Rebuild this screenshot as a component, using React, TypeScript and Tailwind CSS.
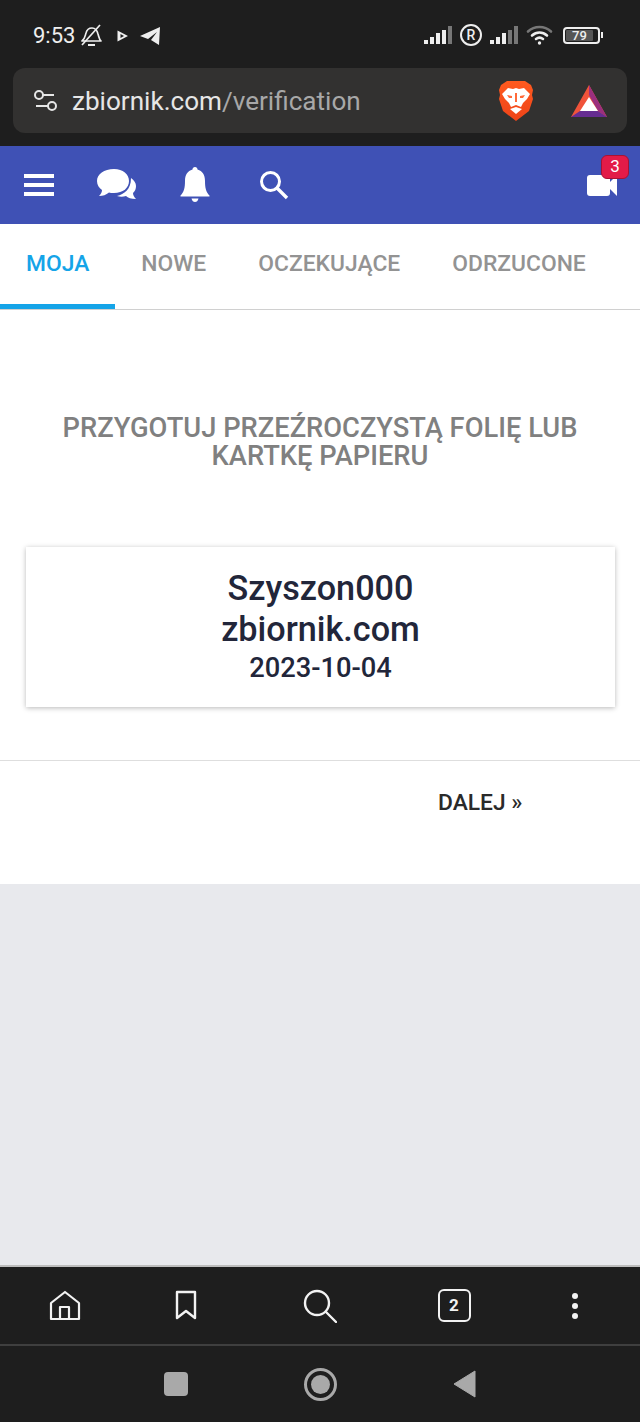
import React from 'react'

const roboto = 'font-["Roboto",sans-serif]'

const SignalBars = ({ dim }: { dim: number }) => {
  const heights = [4, 7, 11, 14, 18]
  return (
    <div className="flex items-end gap-[2px]">
      {heights.map((h, i) => (
        <div
          key={i}
          className={i >= dim ? 'w-[4px] bg-[#777]' : 'w-[4px] bg-[#eee]'}
          style={{ height: h }}
        />
      ))}
    </div>
  )
}

const BraveLogo = () => (
  <svg width="36" height="42" viewBox="0 0 36 42">
    <defs>
      <linearGradient id="brave" x1="0" y1="0" x2="0" y2="1">
        <stop offset="0" stopColor="#ff5a1f" />
        <stop offset="1" stopColor="#ee4318" />
      </linearGradient>
    </defs>
    <path d="M9 1 L27 1 L33 5 L35 10 L34 15 L35 19 L31 31 L18 41 L5 31 L1 19 L2 15 L1 10 L3 5 Z" fill="url(#brave)" />
    <path d="M4 14 L10 8 L15 9 L18 8 L21 9 L26 8 L32 14 L29 19 L25 23 L23 27 L18 25 L13 27 L11 23 L7 19 Z" fill="#fff" />
    <path d="M12 29 L18 27 L24 29 L18 34 Z" fill="#fff" />
    <path d="M9 15 L14 16 L14 18 L11 18 Z M27 15 L22 16 L22 18 L25 18 Z M17 13 L19 13 L19 22 L17 22 Z" fill="#ff6a3a" />
  </svg>
)

const BatLogo = () => (
  <svg width="38" height="34" viewBox="0 0 38 34">
    <path d="M19 1 L37 33 L1 33 Z" fill="#f0533a" />
    <path d="M19 1 L37 33 L28 27 L19 11 Z" fill="#9b2f7f" />
    <path d="M1 33 L10 27 L28 27 L37 33 Z" fill="#662d91" />
    <path d="M19 13 L28 27 L10 27 Z" fill="#fff" />
  </svg>
)

const StatusBar = () => (
  <div className="flex h-[68px] items-start justify-between pl-[33px] pr-[37px] pt-[22px]">
    <div className="flex items-center">
      <span className={`${roboto} text-[22px] leading-[28px] text-[#eee]`}>9:53</span>
      <svg width="22" height="24" viewBox="0 0 22 24" fill="none" stroke="#eee" strokeWidth="1.7" strokeLinejoin="round" className="ml-[5px]">
        <path d="M2 17 C5 15 5 12 6 9 C7 5 10 4 12 4 C15 4 17 6 18 10 C19 13 19 15 21 17 Z" />
        <path d="M2 21 L20 1" />
        <path d="M8 21 H15" strokeWidth="2" />
      </svg>
      <svg width="11" height="12" viewBox="0 0 11 12" className="ml-[15px]">
        <path d="M0.5 0.5 L11 6 L0.5 11.5 Z M3.5 4 L3.5 8 L7 6 Z" fill="#eee" fillRule="evenodd" />
      </svg>
      <svg width="21" height="18" viewBox="0 0 21 18" className="ml-[12px]">
        <path d="M0 9 L20 0 L19 18 L11 13 L17 5 L8 12 Z" fill="#eee" />
      </svg>
    </div>
    <div className="flex items-center gap-[8px] pt-[2px]">
      <SignalBars dim={4} />
      <div className="flex h-[22px] w-[22px] items-center justify-center rounded-full border-2 border-[#eee]">
        <span className={`${roboto} text-[14px] font-medium leading-none text-[#eee]`}>R</span>
      </div>
      <SignalBars dim={3} />
      <svg width="27" height="20" viewBox="0 0 26 20" fill="none" strokeLinecap="round">
        <path d="M1.5 6.5 C8 0.5 18 0.5 24.5 6.5" stroke="#777" strokeWidth="2.6" />
        <path d="M5.5 10.5 C10 6.5 16 6.5 20.5 10.5" stroke="#eee" strokeWidth="2.6" />
        <path d="M9.5 14 C11.5 12.5 14.5 12.5 16.5 14" stroke="#eee" strokeWidth="2.6" />
        <circle cx="13" cy="18" r="1.7" fill="#eee" />
      </svg>
      <div className="ml-[2px] flex items-center">
        <div className="flex h-[17px] w-[37px] items-center rounded-[4px] border-2 border-[#eee] p-[1px]">
          <div className={`${roboto} flex h-full w-[27px] items-center justify-center rounded-[1px] bg-[#555] text-[13px] font-medium leading-none text-[#eee]`}>
            79
          </div>
        </div>
        <div className="ml-[1px] h-[6px] w-[2px] bg-[#eee]" />
      </div>
    </div>
  </div>
)

const AddressBar = () => (
  <div className="px-[13px]">
    <div className="flex h-[65px] items-center rounded-[12px] bg-[#323130] pl-[20px] pr-[19px]">
      <svg width="26" height="24" viewBox="0 0 26 24" fill="none" stroke="#e6e6e6" strokeWidth="2">
        <circle cx="6" cy="6" r="4" />
        <path d="M10 6 H21" />
        <circle cx="19" cy="17" r="4" />
        <path d="M3 17 H15" />
      </svg>
      <span className={`${roboto} ml-[13px] flex-1 pt-[1px] text-[26.1px] leading-[32px] text-[#e6e6e6]`}>
        zbiornik.com<span className="text-[#a8a8a8]">/verification</span>
      </span>
      <BraveLogo />
      <div className="ml-[36px]">
        <BatLogo />
      </div>
    </div>
  </div>
)

const AppHeader = () => (
  <div className="mt-[13px] flex h-[78px] items-center bg-[#3f51b5] pl-[24px] pr-[23px]">
    <div className="flex w-[30px] flex-col gap-[5px] pb-[1px]">
      <div className="h-[4px] bg-white" />
      <div className="h-[4px] bg-white" />
      <div className="h-[4px] bg-white" />
    </div>
    <svg width="40" height="32" viewBox="0 0 40 32" className="ml-[43px]" fill="#fff">
      <path d="M17 0 C26 0 32 5 32 12 C32 19 26 24 17 24 C15 24 13 24 12 23.5 C9 26 6 27 2 27 C4 25 5 23 5 21 C2 19 0 16 0 12 C0 5 7 0 17 0 Z" />
      <path d="M34 9 C37 11 39 14 39 17 C39 20 38 22 36 24 C36 26 37 28 39 30 C34 30 31 29 29 27 C26 28 23 28 20 27 C27 25 34 21 34 9 Z" />
    </svg>
    <svg width="30" height="36" viewBox="0 0 30 36" fill="#fff" className="ml-[43px]">
      <path d="M15 0 C16.5 0 17.5 1 17.5 2.6 C22.5 4 25 8 25 14 C25 21 26 25 29.5 28.5 L29.5 29.5 L0.5 29.5 L0.5 28.5 C4 25 5 21 5 14 C5 8 7.5 4 12.5 2.6 C12.5 1 13.5 0 15 0 Z" />
      <path d="M11.5 31.5 H18.5 C18 34 16.5 35 15 35 C13.5 35 12 34 11.5 31.5 Z" />
    </svg>
    <svg width="30" height="30" viewBox="0 0 30 30" fill="none" stroke="#fff" className="ml-[49px]">
      <circle cx="11.5" cy="11.5" r="9" strokeWidth="3" />
      <path d="M18 18 L28 28" strokeWidth="3.4" />
    </svg>
    <div className="relative ml-auto flex h-[21px] w-[30px] items-center">
      <svg width="30" height="21" viewBox="0 0 30 21" fill="#fff">
        <rect x="0" y="0" width="23" height="21" rx="3" />
        <path d="M22 8 L30 0 L30 21 L22 13 Z" />
      </svg>
      <div className={`${roboto} absolute left-[14px] top-[-20px] flex h-[24px] w-[28px] items-center justify-center rounded-[6px] border border-[#a81234] bg-[#e31b48] text-[17px] leading-none text-white`}>
        3
      </div>
    </div>
  </div>
)

const tabs = [
  { label: 'MOJA', active: true },
  { label: 'NOWE', active: false },
  { label: 'OCZEKUJĄCE', active: false },
  { label: 'ODRZUCONE', active: false },
]

const Tabs = () => (
  <div className="flex h-[86px] border-b border-[#d0d0d0] bg-white">
    {tabs.map((tab) => (
      <div
        key={tab.label}
        className={`${roboto} px-[26px] pt-[25px] text-[22.85px] font-medium leading-[30px] ${
          tab.active ? 'border-b-[5px] border-[#15a4e8] text-[#15a4e8]' : 'text-[#939393]'
        }`}
      >
        {tab.label}
      </div>
    ))}
  </div>
)

const Verification = () => (
  <div className="bg-white">
    <div className="px-[40px] pt-[104px]">
      <h2 className={`${roboto} text-center text-[27.3px] font-medium leading-[28px] text-[#808080]`}>
        PRZYGOTUJ PRZEŹROCZYSTĄ FOLIĘ LUB KARTKĘ PAPIERU
      </h2>
    </div>
    <div className="mx-[26px] mt-[77px] flex h-[160px] w-[589px] flex-col items-center justify-center bg-white pb-[1px] text-[#22263a] shadow-[0_1px_5px_rgba(0,0,0,0.28)]">
      <div className={`${roboto} text-[34.2px] font-medium leading-[41px]`}>Szyszon000</div>
      <div className={`${roboto} text-[34.2px] font-medium leading-[41px]`}>zbiornik.com</div>
      <div className={`${roboto} text-[27.3px] font-medium leading-[36px]`}>2023-10-04</div>
    </div>
    <div className="mt-[53px] h-[124px] border-t border-[#dedede] pl-[438px] pt-[27px]">
      <span className={`${roboto} text-[22.8px] font-medium leading-[30px] text-[#2a2a2a]`}>DALEJ »</span>
    </div>
  </div>
)

const BrowserNav = () => (
  <div className="flex h-[79px] items-center border-b-2 border-[#3f3f3f] bg-[#1e1e1e] text-[#f2f2f2]">
    <div className="flex w-[130px] justify-center">
      <svg width="32" height="32" viewBox="0 0 32 32" fill="none" stroke="#f2f2f2" strokeWidth="2.2" strokeLinejoin="round">
        <path d="M2 13 L16 2 L30 13 V29 H2 Z" />
        <path d="M11 29 V17 H20 V29" />
      </svg>
    </div>
    <div className="flex w-[112px] justify-center">
      <svg width="22" height="31" viewBox="0 0 22 31" fill="none" stroke="#f2f2f2" strokeWidth="2.4" strokeLinejoin="round">
        <path d="M2 2 H20 V28 L11 21 L2 28 Z" />
      </svg>
    </div>
    <div className="flex w-[156px] justify-center">
      <svg width="34" height="34" viewBox="0 0 34 34" fill="none" stroke="#f2f2f2" strokeWidth="2.4" strokeLinecap="round">
        <circle cx="14" cy="14" r="12" />
        <path d="M23 23 L33 33" />
      </svg>
    </div>
    <div className="flex w-[112px] justify-center">
      <div className={`${roboto} flex h-[33px] w-[33px] items-center justify-center rounded-[6px] border-2 border-[#f2f2f2] text-[17px] font-bold`}>
        2
      </div>
    </div>
    <div className="flex w-[130px] flex-col items-center gap-[4px]">
      <div className="h-[6px] w-[6px] rounded-full bg-[#f2f2f2]" />
      <div className="h-[6px] w-[6px] rounded-full bg-[#f2f2f2]" />
      <div className="h-[6px] w-[6px] rounded-full bg-[#f2f2f2]" />
    </div>
  </div>
)

const SystemNav = () => (
  <div className="flex h-[76px] items-center justify-center bg-[#1e1e1e]">
    <div className="h-[24px] w-[24px] rounded-[4px] bg-[#a9a9a9]" />
    <div className="ml-[116px] flex h-[33px] w-[33px] items-center justify-center rounded-full border-[3px] border-[#a9a9a9]">
      <div className="h-[19px] w-[19px] rounded-full bg-[#a9a9a9]" />
    </div>
    <svg width="23" height="28" viewBox="0 0 23 28" className="ml-[116px]">
      <path d="M22 1 V27 L1 14 Z" fill="#a9a9a9" stroke="#a9a9a9" strokeLinejoin="round" />
    </svg>
  </div>
)

export default function App() {
  return (
    <div className="flex h-[1422px] w-[640px] flex-col overflow-hidden bg-[#1e1e1e]">
      <StatusBar />
      <AddressBar />
      <AppHeader />
      <Tabs />
      <Verification />
      <div className="flex-1 border-b-2 border-[#bdbdbd] bg-[#e8e9ed]" />
      <BrowserNav />
      <SystemNav />
    </div>
  )
}
